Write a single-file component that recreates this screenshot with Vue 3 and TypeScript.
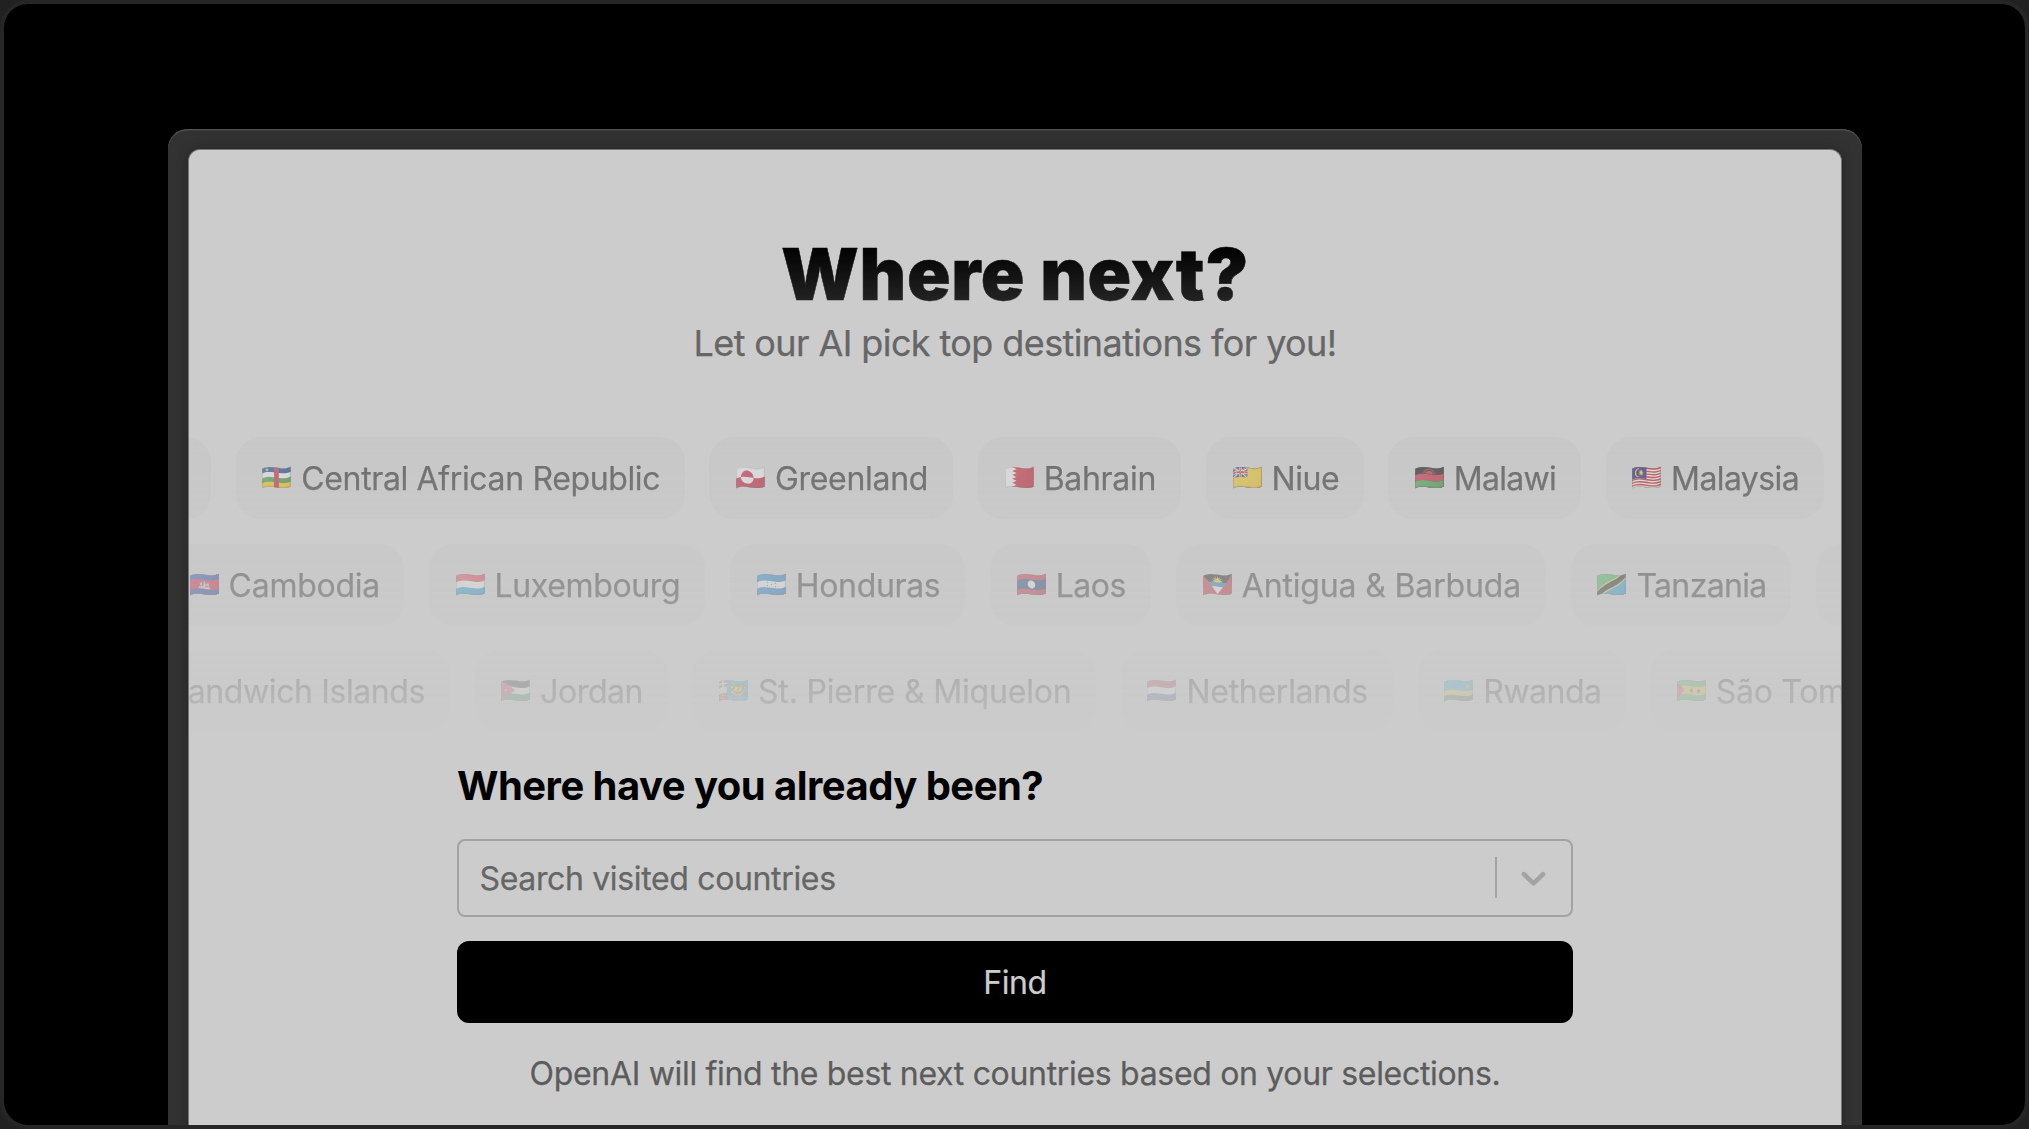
<script setup lang="ts">
interface Chip {
  flag?: string
  name?: string
  width: number
  tracking?: number
  alignEnd?: boolean
}

interface MarqueeRow {
  offset: number
  chips: Chip[]
}

const rows: MarqueeRow[] = [
  {
    offset: -38,
    chips: [
      { width: 60 },
      { flag: '🇨🇫', name: 'Central African Republic', width: 449, tracking: -0.36 },
      { flag: '🇬🇱', name: 'Greenland', width: 244, tracking: -0.31 },
      { flag: '🇧🇭', name: 'Bahrain', width: 203.2, tracking: -0.3 },
      { flag: '🇳🇺', name: 'Niue', width: 157.6, tracking: -0.4 },
      { flag: '🇲🇼', name: 'Malawi', width: 192.6, tracking: -0.7 },
      { flag: '🇲🇾', name: 'Malaysia', width: 218, tracking: -0.6 },
    ],
  },
  {
    offset: -26,
    chips: [
      { flag: '🇰🇭', name: 'Cambodia', width: 241.2, tracking: -0.27 },
      { flag: '🇱🇺', name: 'Luxembourg', width: 276.6, tracking: -0.35 },
      { flag: '🇭🇳', name: 'Honduras', width: 235.2, tracking: -0.33 },
      { flag: '🇱🇦', name: 'Laos', width: 161.4, tracking: -0.47 },
      { flag: '🇦🇬', name: 'Antigua & Barbuda', width: 370, tracking: -0.15 },
      { flag: '🇹🇿', name: 'Tanzania', width: 220.6, tracking: -0.65 },
      { width: 200 },
    ],
  },
  {
    offset: -59,
    chips: [
      { name: 'Sandwich Islands', width: 320, tracking: -0.4, alignEnd: true },
      { flag: '🇯🇴', name: 'Jordan', width: 193, tracking: -0.45 },
      { flag: '🇵🇲', name: 'St. Pierre & Miquelon', width: 403.8, tracking: -0.17 },
      { flag: '🇳🇱', name: 'Netherlands', width: 272.2, tracking: -0.28 },
      { flag: '🇷🇼', name: 'Rwanda', width: 207.8, tracking: -0.5 },
      { flag: '🇸🇹', name: 'São Tomé', width: 400, tracking: -0.3 },
    ],
  },
]
</script>

<template>
  <div class="stage">
    <div class="frame">
      <main class="panel">
        <header class="hero">
          <h1>Where next?</h1>
          <p>Let our AI pick top destinations for you!</p>
        </header>

        <div class="marquee">
          <div
            v-for="(row, i) in rows"
            :key="i"
            class="row"
            :style="{ marginLeft: row.offset + 'px' }"
          >
            <div
              v-for="(chip, j) in row.chips"
              :key="j"
              class="chip"
              :class="{ end: chip.alignEnd }"
              :style="{ width: chip.width + 'px', letterSpacing: (chip.tracking ?? 0) + 'px' }"
            >
              <span v-if="chip.flag" class="flag">{{ chip.flag }}</span>
              <span v-if="chip.name" class="name">{{ chip.name }}</span>
            </div>
          </div>
        </div>

        <section class="form">
          <h2>Where have you already been?</h2>
          <div class="select">
            <span class="placeholder">Search visited countries</span>
            <span class="separator"></span>
            <svg class="chevron" width="41" height="41" viewBox="0 0 20 20" aria-hidden="true">
              <path
                d="M4.516 7.548c0.436-0.446 1.043-0.481 1.576 0l3.908 3.747 3.908-3.747c0.533-0.481 1.141-0.446 1.574 0 0.436 0.445 0.408 1.197 0 1.615-0.406 0.418-4.695 4.502-4.695 4.502-0.217 0.223-0.502 0.335-0.787 0.335s-0.57-0.112-0.789-0.335c0 0-4.287-4.084-4.695-4.502s-0.436-1.17 0-1.615z"
              />
            </svg>
          </div>
          <button type="button">Find</button>
          <p class="hint">OpenAI will find the best next countries based on your selections.</p>
        </section>
      </main>
    </div>
  </div>
</template>

<style>
body {
  margin: 0;
  background: #212121;
  overflow: hidden;
}
</style>

<style scoped>
* {
  box-sizing: border-box;
}

.stage {
  width: 2029px;
  height: 1129px;
  padding: 125px 163px 0 164px;
  border: 4px solid #262626;
  border-radius: 28px;
  background: #000;
  overflow: hidden;
  font-family: Inter, 'Noto Color Emoji', sans-serif;
}

.frame {
  height: 1100px;
  padding: 20px;
  border-radius: 20px;
  background: #323232;
  box-shadow: inset 0 1px 0 #505050, inset 0 2px 0 #3c3c3c;
}

.panel {
  display: flex;
  flex-direction: column;
  height: 1080px;
  padding-top: 88px;
  border: 1px solid #757575;
  border-bottom: 0;
  border-radius: 12px 12px 0 0;
  background: #ccc;
  box-shadow: 0 0 12px rgba(0, 0, 0, 0.28);
  overflow: hidden;
}

.hero {
  text-align: center;
}

h1 {
  margin: 0;
  font-size: 72px;
  font-weight: 900;
  line-height: 72px;
  letter-spacing: 0.65px;
  background: linear-gradient(#000 10%, #242424 90%);
  background-clip: text;
  -webkit-background-clip: text;
  color: transparent;
  -webkit-text-stroke: 0.5px transparent;
}

.hero p {
  margin: 10.5px 0 0;
  font-size: 36px;
  line-height: 44px;
  letter-spacing: -0.6px;
  color: #666;
  -webkit-text-stroke: 0.25px #666;
}

.marquee {
  display: flex;
  flex-direction: column;
  gap: 24.6px;
  margin-top: 72.5px;
  mask-image: linear-gradient(rgba(0, 0, 0, 0.73), rgba(0, 0, 0, 0.09));
}

.row {
  display: flex;
  gap: 24.7px;
}

.chip {
  display: flex;
  flex: none;
  align-items: center;
  height: 82px;
  padding: 0 25px 0 26px;
  border-radius: 25px;
  background: #c6c6c6;
  color: #424242;
  font-size: 32px;
  white-space: nowrap;
  -webkit-text-stroke: 0.25px #424242;
}

.chip.end {
  justify-content: flex-end;
}

.flag {
  flex: none;
  width: 39.6px;
  font-family: 'Noto Color Emoji', sans-serif;
  font-size: 24.8px;
  line-height: 30px;
  letter-spacing: 0;
  opacity: 0.78;
  filter: brightness(0.9);
}

.name {
  padding-top: 1.5px;
}

.form {
  display: flex;
  flex-direction: column;
  width: 1116px;
  margin: 30.2px auto 0;
}

h2 {
  margin: 0;
  font-size: 40px;
  font-weight: 700;
  line-height: 48px;
  letter-spacing: -0.54px;
  color: #000;
}

.select {
  display: flex;
  align-items: center;
  height: 78px;
  margin-top: 28.6px;
  border: 2px solid #a3a3a3;
  border-radius: 8px;
  font-size: 32px;
  letter-spacing: -0.35px;
  color: #666;
  -webkit-text-stroke: 0.25px #666;
}

.placeholder {
  flex: 1;
  padding-top: 1px;
  padding-left: 20.5px;
}

.separator {
  width: 2px;
  height: 41px;
  background: #a3a3a3;
}

.chevron {
  margin: 0 17px 0 16.5px;
  fill: #a3a3a3;
}

button {
  height: 82px;
  margin-top: 24px;
  padding: 1px 0 0;
  border: 0;
  border-radius: 12px;
  background: #000;
  color: #ccc;
  font: 400 32px Inter, sans-serif;
  letter-spacing: -0.35px;
  -webkit-text-stroke: 0.2px #ccc;
}

.hint {
  margin: 31.2px 0 0;
  font-size: 32px;
  line-height: 40px;
  letter-spacing: -0.317px;
  text-align: center;
  color: #5c5c5c;
  -webkit-text-stroke: 0.25px #5c5c5c;
}
</style>
